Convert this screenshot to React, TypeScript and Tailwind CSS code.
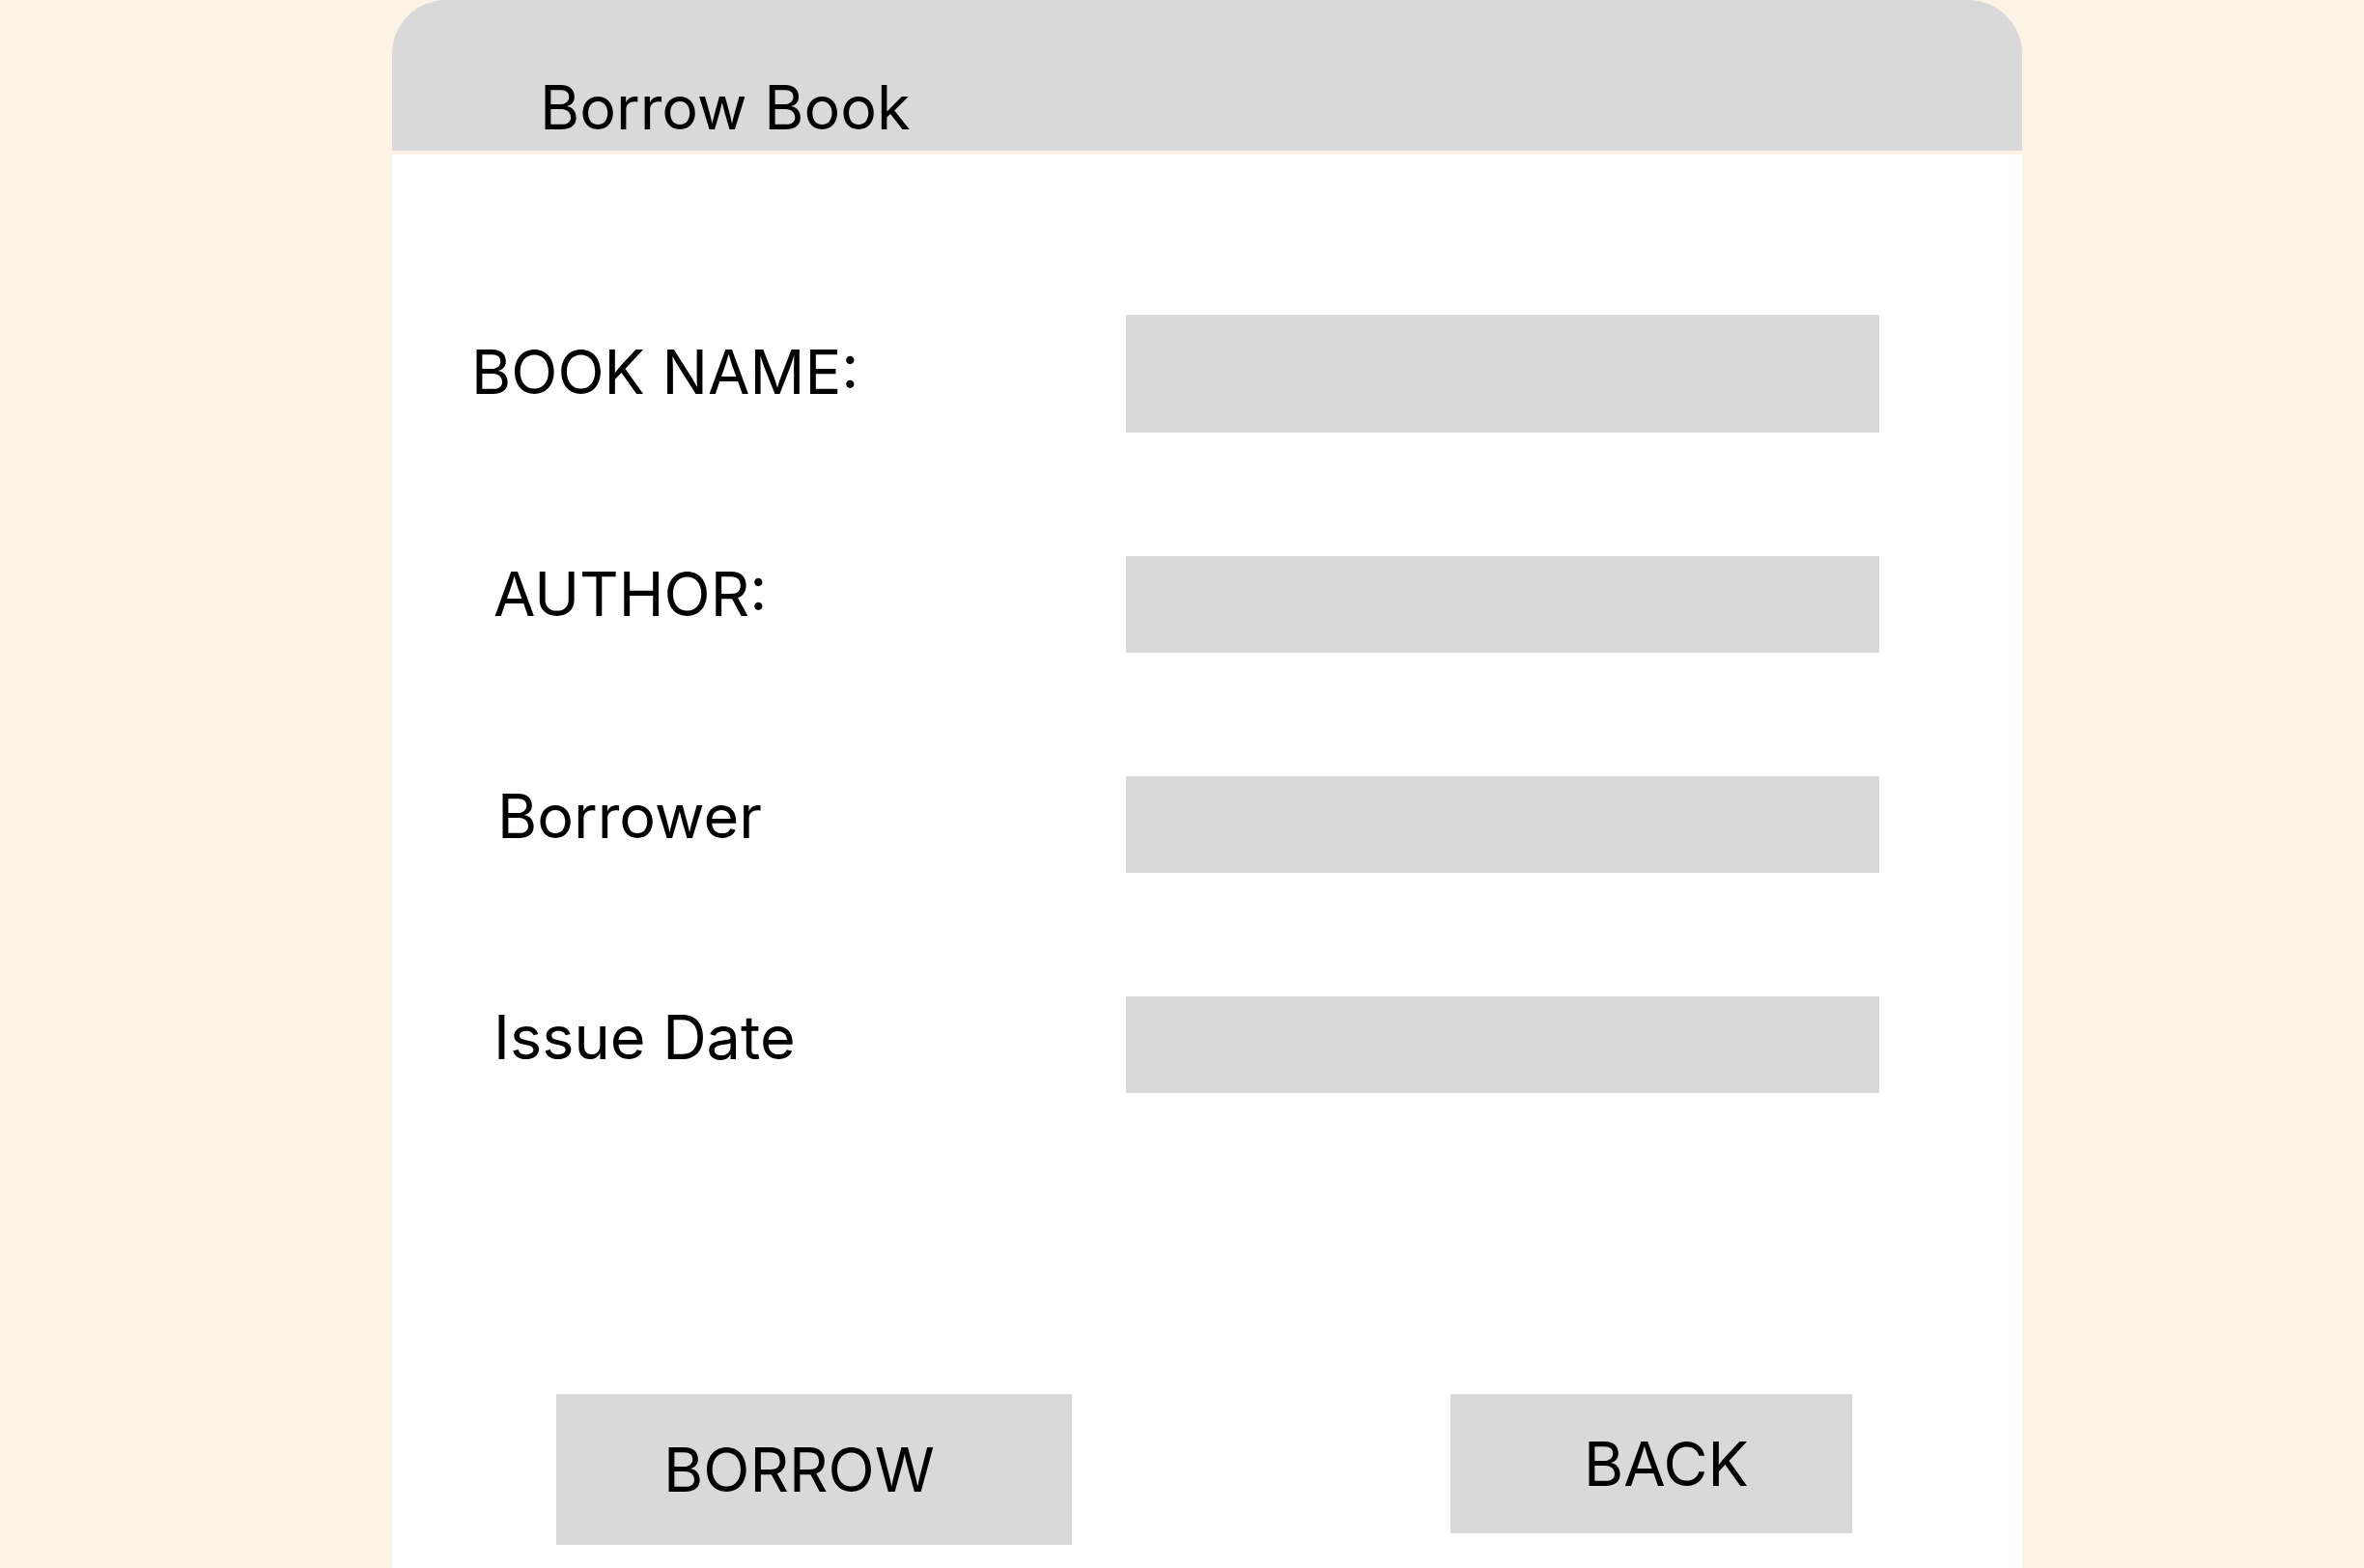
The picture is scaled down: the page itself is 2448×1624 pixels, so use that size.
const fields = [
  { label: 'BOOK NAME:', pl: 'pl-[82px]', mt: 'mt-[27px]', h: 'h-[122px]' },
  { label: 'AUTHOR:', pl: 'pl-[105px]', mt: 'mt-[7px]', h: 'h-[100px]' },
  { label: 'Borrower', pl: 'pl-[109px]', mt: 'mt-[9px]', h: 'h-[100px]' },
  { label: 'Issue Date', pl: 'pl-[105px]', mt: 'mt-[10px]', h: 'h-[100px]' },
]

export default function App() {
  return (
    <div className="min-h-screen bg-[#fdf2e6] pl-[406px] font-['Inter',sans-serif] text-black">
      <div className="flex min-h-screen w-[1688px] flex-col">
        <div className="h-[156px] rounded-t-[56px] bg-[#d9d9d9] pl-[153px] pt-[79px]">
          <h1 className="text-[63px] font-normal leading-[64px]">Borrow Book</h1>
        </div>
        <div className="h-[4px]" />
        <div className="flex flex-1 flex-col bg-white pt-[166px]">
          <div className="flex flex-col gap-[128px]">
            {fields.map((f) => (
              <div key={f.label} className="flex items-start">
                <label className={`w-[760px] ${f.pl} ${f.mt} text-[63px] leading-[64px]`}>{f.label}</label>
                <div className={`w-[780px] ${f.h} bg-[#d9d9d9]`} />
              </div>
            ))}
          </div>
          <div className="mt-[312px] flex items-start pl-[170px]">
            <button className="h-[156px] w-[534px] bg-[#d9d9d9] pl-[111px] text-left text-[63px] leading-[64px]">
              BORROW
            </button>
            <button className="ml-[392px] h-[144px] w-[416px] bg-[#d9d9d9] pl-[138px] text-left text-[63px] leading-[64px]">
              BACK
            </button>
          </div>
        </div>
      </div>
    </div>
  )
}
